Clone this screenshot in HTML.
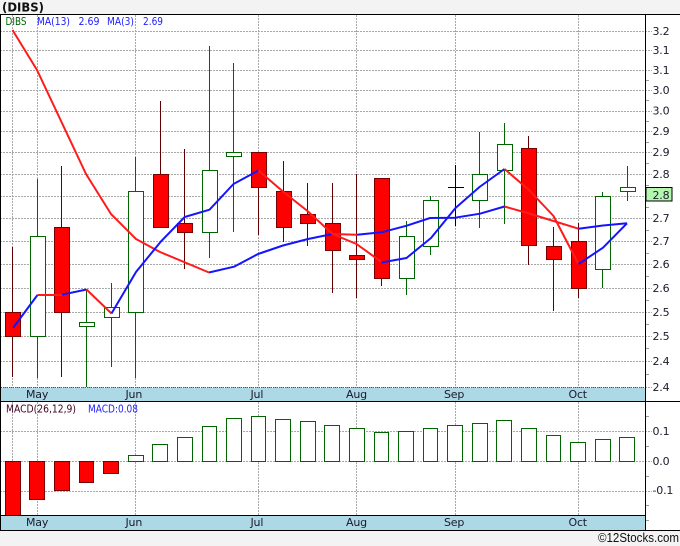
<!DOCTYPE html>
<html><head><meta charset="utf-8"><style>
html,body{margin:0;padding:0;background:#f3f3f3}
svg{display:block}
text{font-family:"DejaVu Sans",sans-serif;font-size:11px;letter-spacing:-0.2px;fill:#1a1a2a}
.l{letter-spacing:0}
.g{stroke:#a8a8a8;stroke-width:1;stroke-dasharray:2 1;fill:none}
.c rect,.c line,.t line,.b rect{shape-rendering:crispEdges}
.wg{stroke:#006400;stroke-width:1}
.wr{stroke:#600000;stroke-width:1}
.bg{fill:#fff;stroke:#006400;stroke-width:1}
.br{fill:#f00;stroke:#7a0000;stroke-width:1}
.mr{fill:none;stroke:#ff1a1a;stroke-width:2;stroke-linejoin:round}
.mb{fill:none;stroke:#1414ff;stroke-width:2;stroke-linejoin:round}
.t line{stroke:#999;stroke-width:1}
</style></head><body>
<svg width="680" height="546" viewBox="0 0 680 546" xmlns="http://www.w3.org/2000/svg">
<rect width="680" height="546" fill="#f3f3f3"/>
<rect x="0" y="14" width="680" height="517" fill="#fff"/>
<text class="l" x="2" y="11.5" style="font-weight:bold;font-size:12.5px;fill:#111" textLength="42" lengthAdjust="spacingAndGlyphs">(DIBS)</text>

<g class="g">
<path d="M0 31.5H652M0 50.5H652M0 70.5H652M0 90.5H652M0 111.5H652M0 131.5H652M0 152.5H652M0 174.5H652M0 196.5H652M0 218.5H652M0 241.5H652M0 264.5H652M0 288.5H652M0 312.5H652M0 336.5H652M0 361.5H652M0 387.5H652"/>
<path d="M12.5 15V388M37.5 15V388M135.5 15V388M258.5 15V388M356.5 15V388M455.5 15V388M578.5 15V388"/>
<path d="M0 431.5H652M0 461.5H652M0 491.5H652"/>
<path d="M12.5 402V515M37.5 402V515M135.5 402V515M258.5 402V515M356.5 402V515M455.5 402V515M578.5 402V515"/>
</g>

<g class="c">
<line class="wr" x1="12.5" y1="247" x2="12.5" y2="377"/><rect class="br" x="5.5" y="312.5" width="15" height="24"/>
<line class="wg" x1="37.5" y1="179" x2="37.5" y2="378"/><rect class="bg" x="30.5" y="236.5" width="15" height="100"/>
<line class="wr" x1="61.5" y1="166" x2="61.5" y2="377"/><rect class="br" x="54.5" y="227.5" width="15" height="85"/>
<line class="wg" x1="86.5" y1="289" x2="86.5" y2="387"/><rect class="bg" x="79.5" y="322.5" width="15" height="4"/>
<line class="wg" x1="111.5" y1="283" x2="111.5" y2="367"/><rect class="bg" x="104.5" y="307.5" width="15" height="10"/>
<line class="wg" x1="135.5" y1="157" x2="135.5" y2="378"/><rect class="bg" x="128.5" y="191.5" width="15" height="121"/>
<line class="wr" x1="160.5" y1="101" x2="160.5" y2="228"/><rect class="br" x="153.5" y="174.5" width="15" height="53"/>
<line class="wr" x1="184.5" y1="149" x2="184.5" y2="269"/><rect class="br" x="177.5" y="223.5" width="15" height="9"/>
<line class="wg" x1="209.5" y1="46" x2="209.5" y2="258"/><rect class="bg" x="202.5" y="170.5" width="15" height="62"/>
<line class="wg" x1="233.5" y1="63" x2="233.5" y2="232"/><rect class="bg" x="226.5" y="152.5" width="15" height="4"/>
<line class="wr" x1="258.5" y1="152" x2="258.5" y2="235"/><rect class="br" x="251.5" y="152.5" width="15" height="35"/>
<line class="wr" x1="283.5" y1="161" x2="283.5" y2="242"/><rect class="br" x="276.5" y="191.5" width="15" height="36"/>
<line class="wr" x1="307.5" y1="183" x2="307.5" y2="246"/><rect class="br" x="300.5" y="214.5" width="15" height="9"/>
<line class="wr" x1="332.5" y1="183" x2="332.5" y2="293"/><rect class="br" x="325.5" y="223.5" width="15" height="27"/>
<line class="wr" x1="356.5" y1="174" x2="356.5" y2="298"/><rect class="br" x="349.5" y="255.5" width="15" height="4"/>
<line class="wr" x1="381.5" y1="178" x2="381.5" y2="286"/><rect class="br" x="374.5" y="178.5" width="15" height="100"/>
<line class="wg" x1="406.5" y1="221" x2="406.5" y2="295"/><rect class="bg" x="399.5" y="236.5" width="15" height="42"/>
<line class="wg" x1="430.5" y1="196" x2="430.5" y2="255"/><rect class="bg" x="423.5" y="200.5" width="15" height="46"/>
<line x1="455.5" y1="165" x2="455.5" y2="226" stroke="#000"/><line x1="448" y1="187.5" x2="464" y2="187.5" stroke="#000"/>
<line class="wg" x1="479.5" y1="132" x2="479.5" y2="228"/><rect class="bg" x="472.5" y="174.5" width="15" height="26"/>
<line class="wg" x1="504.5" y1="123" x2="504.5" y2="224"/><rect class="bg" x="497.5" y="144.5" width="15" height="26"/>
<line class="wr" x1="528.5" y1="136" x2="528.5" y2="265"/><rect class="br" x="521.5" y="148.5" width="15" height="97"/>
<line class="wr" x1="553.5" y1="227" x2="553.5" y2="311"/><rect class="br" x="546.5" y="246.5" width="15" height="13"/>
<line class="wr" x1="578.5" y1="223" x2="578.5" y2="298"/><rect class="br" x="571.5" y="241.5" width="15" height="47"/>
<line class="wg" x1="602.5" y1="192" x2="602.5" y2="288"/><rect class="bg" x="595.5" y="196.5" width="15" height="73"/>
<line class="wg" x1="627.5" y1="166" x2="627.5" y2="201"/><rect class="bg" x="620.5" y="187.5" width="15" height="4"/>
</g>

<!-- slow MA -->
<path class="mr" d="M12.5 30L37 70L61.5 122L86 174L111 214L136 239L160 252L184 262L209 272.5"/>
<path class="mb" d="M209 272.5L234 266.7L258 254L283 245.5L308 239L332.5 234"/>
<path class="mr" d="M332.5 234L357 234.7"/>
<path class="mb" d="M357 234.7L381.7 232.3L406.7 225.7L430 218L455 217.7L480 213.7L504.5 206.5"/>
<path class="mr" d="M504.5 206.5L529 213.5L553.5 221L578.5 228.7"/>
<path class="mb" d="M578.5 228.7L603 225.5L627 223.3"/>
<!-- fast MA -->
<path class="mb" d="M13 328L37.5 295"/>
<path class="mr" d="M37.5 295L62 295"/>
<path class="mb" d="M62 294.7L86.5 289.5"/>
<path class="mr" d="M86.5 289.5L111.5 313.5"/>
<path class="mb" d="M111.5 313.5L136 272L160.7 241.7L184.7 217L209.5 209.7L233.5 184L258.5 170.5"/>
<path class="mr" d="M258.5 170.5L283.5 192L307.5 211L332.5 234L356.5 244L381.5 262"/>
<path class="mb" d="M381.5 262.5L406.5 258L431 238L455.5 208L479.5 187L504.5 169"/>
<path class="mr" d="M504.5 169L529 190L553.5 216L578.5 264"/>
<path class="mb" d="M578.5 264L603 247.7L627 223.3"/>

<!-- MACD bars -->
<g class="b">
<rect class="br" x="5.5" y="461.5" width="15" height="54"/>
<rect class="br" x="29.5" y="461.5" width="15" height="38"/>
<rect class="br" x="54.5" y="461.5" width="15" height="29"/>
<rect class="br" x="79.5" y="461.5" width="14" height="21"/>
<rect class="br" x="103.5" y="461.5" width="15" height="12"/>
<rect class="bg" x="128.5" y="455.5" width="15" height="6"/>
<rect class="bg" x="152.5" y="444.5" width="15" height="17"/>
<rect class="bg" x="177.5" y="437.5" width="15" height="24"/>
<rect class="bg" x="202.5" y="426.5" width="14" height="35"/>
<rect class="bg" x="226.5" y="418.5" width="15" height="43"/>
<rect class="bg" x="251.5" y="416.5" width="14" height="45"/>
<rect class="bg" x="275.5" y="419.5" width="15" height="42"/>
<rect class="bg" x="300.5" y="421.5" width="15" height="40"/>
<rect class="bg" x="324.5" y="425.5" width="15" height="36"/>
<rect class="bg" x="349.5" y="428.5" width="15" height="33"/>
<rect class="bg" x="374.5" y="432.5" width="14" height="29"/>
<rect class="bg" x="398.5" y="431.5" width="15" height="30"/>
<rect class="bg" x="423.5" y="428.5" width="14" height="33"/>
<rect class="bg" x="447.5" y="425.5" width="15" height="36"/>
<rect class="bg" x="472.5" y="423.5" width="15" height="38"/>
<rect class="bg" x="496.5" y="420.5" width="15" height="41"/>
<rect class="bg" x="521.5" y="428.5" width="15" height="33"/>
<rect class="bg" x="546.5" y="435.5" width="14" height="26"/>
<rect class="bg" x="570.5" y="442.5" width="15" height="19"/>
<rect class="bg" x="595.5" y="439.5" width="15" height="22"/>
<rect class="bg" x="619.5" y="437.5" width="15" height="24"/>
</g>

<!-- date strips -->
<rect x="1" y="388" width="644" height="13" fill="#add8e6"/>
<rect x="1" y="516" width="644" height="14" fill="#add8e6"/>
<path d="M1 387.5H645" class="g" style="stroke:#555;stroke-dasharray:1 1"/>
<g shape-rendering="crispEdges" fill="#000">
<rect x="0" y="14" width="680" height="1"/>
<rect x="0" y="14" width="1" height="517"/>
<rect x="645" y="14" width="1" height="517"/>
<rect x="0" y="401" width="680" height="1"/>
<rect x="0" y="515" width="645" height="1"/>
<rect x="0" y="530" width="680" height="1"/>
</g>

<g class="t">
<line x1="646" y1="80.5" x2="649" y2="80.5"/><line x1="646" y1="100.5" x2="649" y2="100.5"/><line x1="646" y1="121.5" x2="649" y2="121.5"/><line x1="646" y1="142.5" x2="649" y2="142.5"/><line x1="646" y1="163.5" x2="649" y2="163.5"/><line x1="646" y1="185.5" x2="649" y2="185.5"/>
<line x1="646" y1="207.5" x2="649" y2="207.5"/><line x1="646" y1="230.5" x2="649" y2="230.5"/><line x1="646" y1="253.5" x2="649" y2="253.5"/><line x1="646" y1="276.5" x2="649" y2="276.5"/><line x1="646" y1="300.5" x2="649" y2="300.5"/><line x1="646" y1="324.5" x2="649" y2="324.5"/><line x1="646" y1="348.5" x2="649" y2="348.5"/><line x1="646" y1="374.5" x2="649" y2="374.5"/>
<line x1="646" y1="416.5" x2="649" y2="416.5"/><line x1="646" y1="446.5" x2="649" y2="446.5"/><line x1="646" y1="476.5" x2="649" y2="476.5"/><line x1="646" y1="505.5" x2="649" y2="505.5"/><line x1="646" y1="520.5" x2="649" y2="520.5"/>
</g>

<rect x="646" y="187.5" width="26" height="13.5" fill="#b4f5b0" stroke="#000" shape-rendering="crispEdges"/>

<g>
<text x="652.5" y="35">3.2</text><text x="652.5" y="54">3.1</text><text x="652.5" y="74">3.1</text><text x="652.5" y="94">3.0</text><text x="652.5" y="114.5">3.0</text><text x="652.5" y="135">2.9</text><text x="652.5" y="156">2.9</text><text x="652.5" y="178">2.8</text><text x="652.5" y="199">2.8</text><text x="652.5" y="222">2.7</text><text x="652.5" y="245">2.7</text><text x="652.5" y="268">2.6</text><text x="652.5" y="292">2.6</text><text x="652.5" y="316">2.5</text><text x="652.5" y="340">2.5</text><text x="652.5" y="365">2.4</text><text x="652.5" y="391">2.4</text>
<text x="652.5" y="435">0.1</text><text x="652.5" y="465">0.0</text><text x="652.5" y="494">-0.1</text>
</g>

<g>
<text x="26" y="398">May</text><text x="125.5" y="398">Jun</text><text x="250.5" y="398">Jul</text><text x="346" y="398">Aug</text><text x="444" y="398">Sep</text><text x="568.5" y="398">Oct</text>
<text x="26" y="526">May</text><text x="125.5" y="526">Jun</text><text x="250.5" y="526">Jul</text><text x="346" y="526">Aug</text><text x="444" y="526">Sep</text><text x="568.5" y="526">Oct</text>
</g>

<text class="l" x="5.5" y="25" style="fill:#006400" textLength="21" lengthAdjust="spacingAndGlyphs">DIBS</text>
<text class="l" x="37" y="25" style="fill:#2020ff" textLength="33" lengthAdjust="spacingAndGlyphs">MA(13)</text>
<text class="l" x="78.5" y="25" style="fill:#2020ff" textLength="21" lengthAdjust="spacingAndGlyphs">2.69</text>
<text class="l" x="107" y="25" style="fill:#2020ff" textLength="27" lengthAdjust="spacingAndGlyphs">MA(3)</text>
<text class="l" x="143" y="25" style="fill:#2020ff" textLength="20" lengthAdjust="spacingAndGlyphs">2.69</text>
<text class="l" x="6" y="412.5" style="fill:#400020" textLength="70" lengthAdjust="spacingAndGlyphs">MACD(26,12,9)</text>
<text class="l" x="88" y="412.5" style="fill:#2020ff" textLength="50" lengthAdjust="spacingAndGlyphs">MACD:0.08</text>

<text class="l" x="598" y="542" style="font-family:'Liberation Sans',sans-serif;font-size:12.5px;fill:#111" textLength="81" lengthAdjust="spacingAndGlyphs">©12Stocks.com</text>
</svg>
</body></html>
